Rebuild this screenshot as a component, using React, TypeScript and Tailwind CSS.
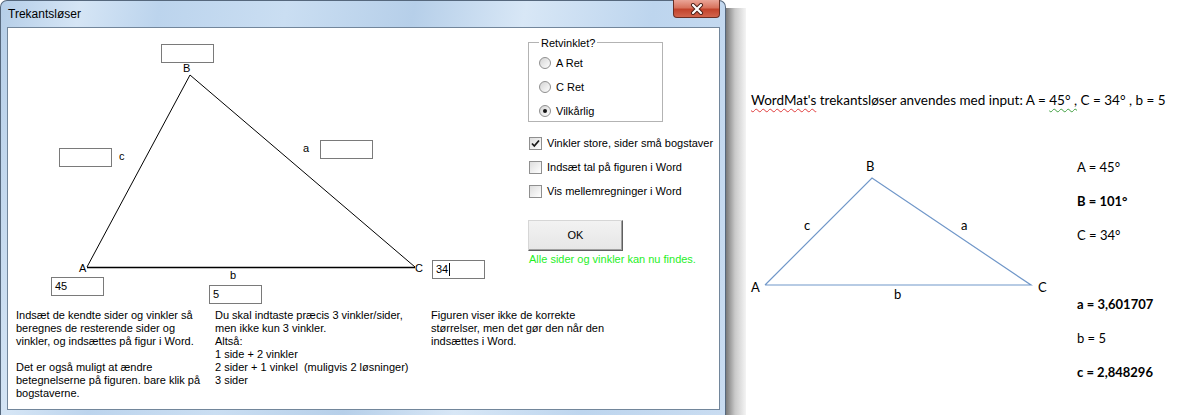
import React from 'react';

const ui = "font-['Liberation_Sans',Arial,sans-serif] text-[11px] text-black";
const doc = "font-['Lato','Open_Sans',sans-serif] text-black";

function TextBox({ value = '', cursor = false, className = '' }: { value?: string; cursor?: boolean; className?: string }) {
  return (
    <div className={`absolute h-[19px] w-[53px] border border-[#7a7a7a] bg-white pl-[3px] leading-[17px] ${className}`}>
      {value}
      {cursor && <span className="ml-px inline-block h-[13px] w-px bg-black align-[-3px]" />}
    </div>
  );
}

function Radio({ label, checked = false }: { label: string; checked?: boolean }) {
  return (
    <div className="flex h-[16px] items-center gap-[5px]">
      <span className="flex h-[12px] w-[12px] items-center justify-center rounded-full border border-[#8f8f8f] bg-[linear-gradient(135deg,#d4d4d4,#fefefe)]">
        {checked && <span className="h-[4px] w-[4px] rounded-full bg-[#151515]" />}
      </span>
      <span>{label}</span>
    </div>
  );
}

function Check({ label, checked = false }: { label: string; checked?: boolean }) {
  return (
    <div className="flex h-[16px] items-center gap-[5px]">
      <span className="flex h-[13px] w-[13px] items-center justify-center border border-[#8f8f8f] bg-[linear-gradient(135deg,#dedede,#ffffff)]">
        {checked && (
          <svg width="11" height="11" viewBox="0 0 11 11">
            <path d="M2 5.5 L4.3 8 L9 2.5" fill="none" stroke="#1b1b1b" strokeWidth="1.8" />
          </svg>
        )}
      </span>
      <span>{label}</span>
    </div>
  );
}

function Diagram() {
  return (
    <div className="relative h-[281px] w-[520px] shrink-0">
      <svg className="absolute inset-0" width="520" height="281">
        <line x1="79" y1="239" x2="182" y2="47" stroke="#000" strokeWidth="1" />
        <line x1="182" y1="47" x2="407" y2="239" stroke="#000" strokeWidth="1" />
        <line x1="79" y1="239.5" x2="407" y2="239.5" stroke="#000" strokeWidth="1.3" />
      </svg>
      <TextBox className="left-[153px] top-[16px]" />
      <span className="absolute left-[175px] top-[34px] leading-[13px]">B</span>
      <TextBox className="left-[51px] top-[120px]" />
      <span className="absolute left-[111px] top-[122px] leading-[13px]">c</span>
      <span className="absolute left-[295px] top-[114px] leading-[13px]">a</span>
      <TextBox className="left-[312px] top-[112px]" />
      <span className="absolute left-[71px] top-[234px] leading-[13px]">A</span>
      <span className="absolute left-[407px] top-[234px] leading-[13px]">C</span>
      <TextBox value="34" cursor className="left-[424px] top-[232px]" />
      <TextBox value="45" className="left-[43px] top-[249px]" />
      <span className="absolute left-[222px] top-[241px] leading-[13px]">b</span>
      <TextBox value="5" className="left-[201px] top-[257px]" />
    </div>
  );
}

function SidePanel() {
  return (
    <div className="flex flex-col pt-[14px]">
      <div className="relative h-[80px] w-[135px] border border-[#b3b3b3] pl-[10px] pt-[12px]">
        <span className="absolute -top-[7px] left-[10px] bg-white px-[2px] leading-[14px]">Retvinklet?</span>
        <div className="flex flex-col gap-[8px]">
          <Radio label="A Ret" />
          <Radio label="C Ret" />
          <Radio label="Vilkårlig" checked />
        </div>
      </div>
      <div className="mt-[13px] flex flex-col gap-[8px] pl-px">
        <Check label="Vinkler store, sider små bogstaver" checked />
        <Check label="Indsæt tal på figuren i Word" />
        <Check label="Vis mellemregninger i Word" />
      </div>
      <button className="mt-[21px] flex h-[31px] w-[95px] items-center justify-center border border-t-[#d6d6d6] border-l-[#d6d6d6] border-r-[#5f5f5f] border-b-[#5f5f5f] bg-[linear-gradient(to_bottom,#f2f2f2,#e6e6e6)] shadow-[inset_-1px_-1px_0_#a0a0a0]">
        OK
      </button>
      <span className="mt-px pl-px leading-[14px] text-[#1fef1f]">Alle sider og vinkler kan nu findes.</span>
    </div>
  );
}

function HelpText() {
  return (
    <div className="flex pl-[8px] leading-[13px]">
      <div className="w-[199px]">
        Indsæt de kendte sider og vinkler så<br />
        beregnes de resterende sider og<br />
        vinkler, og indsættes på figur i Word.<br />
        <br />
        Det er også muligt at ændre<br />
        betegnelserne på figuren. bare klik på<br />
        bogstaverne.
      </div>
      <div className="w-[216px] whitespace-pre">
        {'Du skal indtaste præcis 3 vinkler/sider,\nmen ikke kun 3 vinkler.\nAltså:\n1 side + 2 vinkler\n2 sider + 1 vinkel  (muligvis 2 løsninger)\n3 sider'}
      </div>
      <div>
        Figuren viser ikke de korrekte<br />
        størrelser, men det gør den når den<br />
        indsættes i Word.
      </div>
    </div>
  );
}

function Dialog() {
  return (
    <div className="flex h-[415px] w-[726px] shrink-0 flex-col rounded-t-[7px] border border-b-0 border-[#56687d] bg-[linear-gradient(100deg,#b5cee8_0%,#d5e5f5_10%,#bcd4ed_20%,#cadef2_36%,#b6cfe9_52%,#d8e7f6_66%,#bdd5ee_82%,#c9dcf1_100%)]">
      <div className="flex h-[26px] shrink-0">
        <span className="pl-[7px] pt-[6px] font-['Liberation_Sans',Arial,sans-serif] text-[12px] leading-[14px] text-black">Trekantsløser</span>
        <div className="-mt-px ml-auto mr-[5px] flex h-[18px] w-[47px] items-center justify-center rounded-b-[4px] border border-t-0 border-[#6a2e24] bg-[linear-gradient(to_bottom,#eaa597,#d8735e_45%,#c2432c_55%,#d2654d)]">
          <svg width="14" height="12" viewBox="0 0 14 12">
            <path d="M3 2 L11 10 M11 2 L3 10" stroke="#4a1e17" strokeWidth="4" strokeLinecap="round" />
            <path d="M3 2 L11 10 M11 2 L3 10" stroke="#ffffff" strokeWidth="2.2" strokeLinecap="round" />
          </svg>
        </div>
      </div>
      <div className={`ml-[6px] mr-[5px] h-[383px] shrink-0 border border-[#72869b] bg-white ${ui}`}>
        <div className="flex">
          <Diagram />
          <SidePanel />
        </div>
        <HelpText />
      </div>
    </div>
  );
}

function WordPage() {
  return (
    <div className={`flex flex-1 flex-col pl-[5px] ${doc}`}>
      <p className="mt-[91px] text-[13.5px] leading-[18px]">
        <span className="underline decoration-[#e03b3b] decoration-wavy decoration-1 underline-offset-[3px]">WordMat's</span> trekantsløser anvendes med input: A ={' '}
        <span className="underline decoration-[#3f9f3f] decoration-wavy decoration-1 underline-offset-[3px]">45° ,</span> C = 34° , b = 5
      </p>
      <div className="mt-[41px] flex">
        <div className="relative h-[160px] w-[320px] shrink-0 text-[13px] leading-[16px]">
          <svg className="absolute inset-0" width="320" height="160">
            <polyline points="14,135 121,28 280,135 14,135" fill="none" stroke="#7097c9" strokeWidth="1.2" />
          </svg>
          <span className="absolute left-[115px] top-[8px]">B</span>
          <span className="absolute left-[53px] top-[67px]">c</span>
          <span className="absolute left-[210px] top-[67px]">a</span>
          <span className="absolute left-0 top-[129px]">A</span>
          <span className="absolute left-[287px] top-[129px]">C</span>
          <span className="absolute left-[143px] top-[136px]">b</span>
        </div>
        <div className="ml-[6px] flex flex-col gap-[18px] pt-[9px] text-[13px] leading-[16px]">
          <span>A = 45°</span>
          <span className="font-bold">B = 101°</span>
          <span>C = 34°</span>
          <span className="h-[17px]" />
          <span className="font-bold">a = 3,601707</span>
          <span>b = 5</span>
          <span className="font-bold">c = 2,848296</span>
        </div>
      </div>
    </div>
  );
}

export default function App() {
  return (
    <div className="flex h-[415px] w-[1180px] overflow-hidden bg-white">
      <Dialog />
      <div className="mt-[8px] w-[20px] shrink-0 bg-[linear-gradient(to_right,#7a7a7a,#c9c9c9_45%,#f4f4f4)]" />
      <WordPage />
    </div>
  );
}
